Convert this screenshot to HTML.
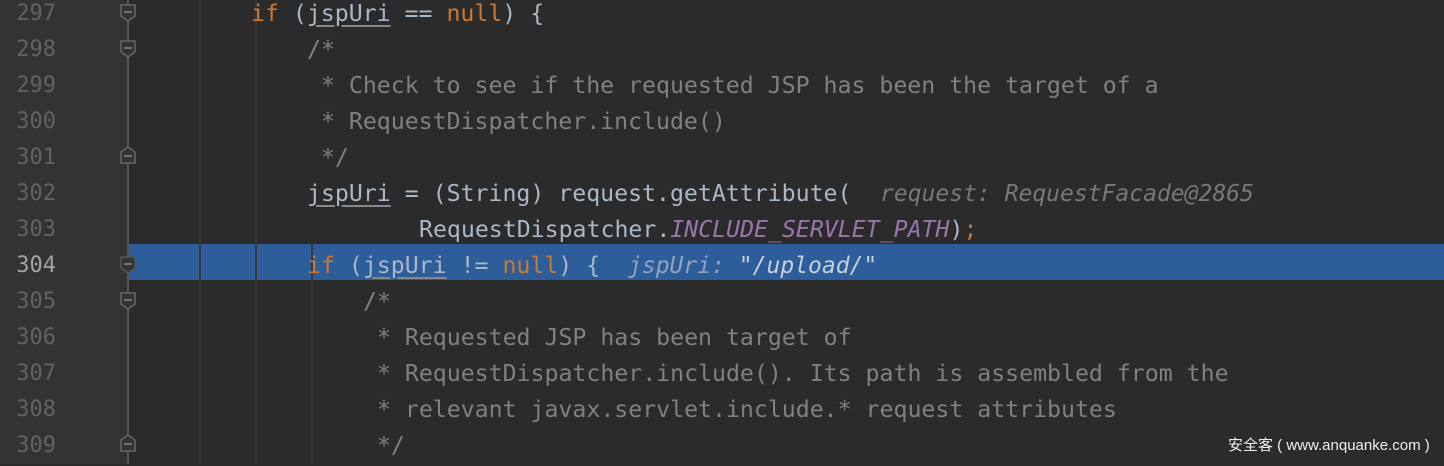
<!DOCTYPE html>
<html><head><meta charset="utf-8"><style>
body{margin:0;width:1444px;height:464px;overflow:hidden;background:#2b2b2b;position:relative;font-family:"DejaVu Sans Mono","Liberation Mono",monospace;}
.gut{position:absolute;left:0;top:0;width:128px;height:464px;background:#313335;}
.vl{position:absolute;left:127px;top:0;width:2px;height:464px;background:#555;}
.hl{position:absolute;left:128px;top:244px;width:1316px;height:36px;background:#2d5e99;}
.g{position:absolute;top:0;width:2px;height:464px;background:#393939;}
.ln{position:absolute;left:0;width:56px;text-align:right;font-size:22px;color:#606366;line-height:36px;}
.c{position:absolute;font-size:23.2px;line-height:36px;white-space:pre;color:#a9b7c6;}
.k{color:#cc7832}.cm{color:#808080}.p{color:#9876aa;font-style:italic}
.h{position:absolute;font-size:23px;line-height:36px;white-space:pre;color:#787878;font-style:italic;font-family:"DejaVu Sans Mono",monospace;}
.u{text-decoration:underline;text-decoration-color:#888;text-underline-offset:4px}
.f{position:absolute;left:120px;}
.wm{position:absolute;left:1228px;top:434px;font-size:15px;color:#eee;font-family:"Liberation Sans","Noto Sans CJK SC",sans-serif;white-space:pre;}
.t{position:absolute;left:0;top:2px;width:1444px;height:464px;}
</style></head><body>
<div class="gut"></div>
<div class="hl"></div>
<div class="g" style="left:199px"></div><div class="g" style="left:255px"></div><div class="g" style="left:311px;top:244px;height:220px"></div>
<div class="vl"></div>
<div class="t">
<div class="ln" style="top:-6px">297</div>
<div class="ln" style="top:30px">298</div>
<div class="ln" style="top:66px">299</div>
<div class="ln" style="top:102px">300</div>
<div class="ln" style="top:138px">301</div>
<div class="ln" style="top:174px">302</div>
<div class="ln" style="top:210px">303</div>
<div class="ln" style="top:246px;color:#a4a3a3">304</div>
<div class="ln" style="top:282px">305</div>
<div class="ln" style="top:318px">306</div>
<div class="ln" style="top:354px">307</div>
<div class="ln" style="top:390px">308</div>
<div class="ln" style="top:426px">309</div>
<div class="c" style="left:251px;top:-6px"><span class="k">if</span> (<span class="u">jspUri</span> == <span class="k">null</span>) {</div>
<div class="c cm" style="left:307px;top:30px">/*</div>
<div class="c cm" style="left:307px;top:66px"> * Check to see if the requested JSP has been the target of a</div>
<div class="c cm" style="left:307px;top:102px"> * RequestDispatcher.include()</div>
<div class="c cm" style="left:307px;top:138px"> */</div>
<div class="c" style="left:307px;top:174px"><span class="u">jspUri</span> = (String) request.getAttribute(</div>
<div class="h" style="left:880px;top:174px">request: RequestFacade@2865</div>
<div class="c" style="left:419px;top:210px">RequestDispatcher.<span class="p">INCLUDE_SERVLET_PATH</span>)<span class="k">;</span></div>
<div class="c" style="left:307px;top:246px"><span class="k">if</span> (<span class="u">jspUri</span> != <span class="k">null</span>) {</div>
<div class="h" style="left:628px;top:246px;color:#8fa3bd">jspUri: <span style="color:#c5d0dc">"/upload/"</span></div>
<div class="c cm" style="left:363px;top:282px">/*</div>
<div class="c cm" style="left:363px;top:318px"> * Requested JSP has been target of</div>
<div class="c cm" style="left:363px;top:354px"> * RequestDispatcher.include(). Its path is assembled from the</div>
<div class="c cm" style="left:363px;top:390px"> * relevant javax.servlet.include.* request attributes</div>
<div class="c cm" style="left:363px;top:426px"> */</div>
</div>
<svg class="f" style="top:4px" width="16" height="18"><path d="M1 1H15V12L8 17L1 12Z" fill="#313335" stroke="#666" stroke-width="1.5"/><path d="M4 8H12" stroke="#888" stroke-width="1.5"/></svg>
<svg class="f" style="top:40px" width="16" height="18"><path d="M1 1H15V12L8 17L1 12Z" fill="#313335" stroke="#666" stroke-width="1.5"/><path d="M4 8H12" stroke="#888" stroke-width="1.5"/></svg>
<svg class="f" style="top:146px" width="16" height="18"><path d="M1 17H15V6L8 1L1 6Z" fill="#313335" stroke="#666" stroke-width="1.5"/><path d="M4 10H12" stroke="#888" stroke-width="1.5"/></svg>
<svg class="f" style="top:256px" width="16" height="18"><path d="M1 1H15V12L8 17L1 12Z" fill="#313335" stroke="#555" stroke-width="1.5"/><path d="M4 8H12" stroke="#888" stroke-width="1.5"/></svg>
<svg class="f" style="top:292px" width="16" height="18"><path d="M1 1H15V12L8 17L1 12Z" fill="#313335" stroke="#666" stroke-width="1.5"/><path d="M4 8H12" stroke="#888" stroke-width="1.5"/></svg>
<svg class="f" style="top:434px" width="16" height="18"><path d="M1 17H15V6L8 1L1 6Z" fill="#313335" stroke="#666" stroke-width="1.5"/><path d="M4 10H12" stroke="#888" stroke-width="1.5"/></svg>
<div class="wm">安全客 ( www.anquanke.com )</div>
</body></html>
